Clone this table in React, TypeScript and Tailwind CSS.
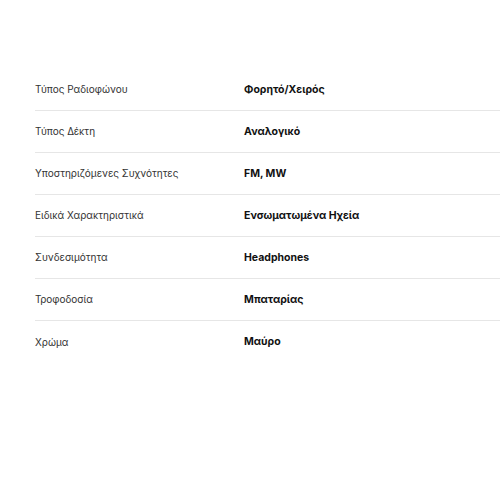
const specs = [
  { label: "Τύπος Ραδιοφώνου", value: "Φορητό/Χειρός" },
  { label: "Τύπος Δέκτη", value: "Αναλογικό" },
  { label: "Υποστηριζόμενες Συχνότητες", value: "FM, MW" },
  { label: "Ειδικά Χαρακτηριστικά", value: "Ενσωματωμένα Ηχεία" },
  { label: "Συνδεσιμότητα", value: "Headphones" },
  { label: "Τροφοδοσία", value: "Μπαταρίας" },
  { label: "Χρώμα", value: "Μαύρο" },
];

const App = () => {
  return (
    <main className="min-h-[500px] bg-white pt-[69px] pl-[35px] font-['Inter',sans-serif]">
      {specs.map((s, i) => (
        <div
          key={s.label}
          className={`flex h-[42px] items-center ${i < specs.length - 1 ? "border-b border-[#e6e6e6]" : ""}`}
        >
          <div className="w-[209px] text-[10px] text-[#333333]">{s.label}</div>
          <div className="text-[10.5px] font-bold text-[#111111]">{s.value}</div>
        </div>
      ))}
    </main>
  );
};

export default App;
